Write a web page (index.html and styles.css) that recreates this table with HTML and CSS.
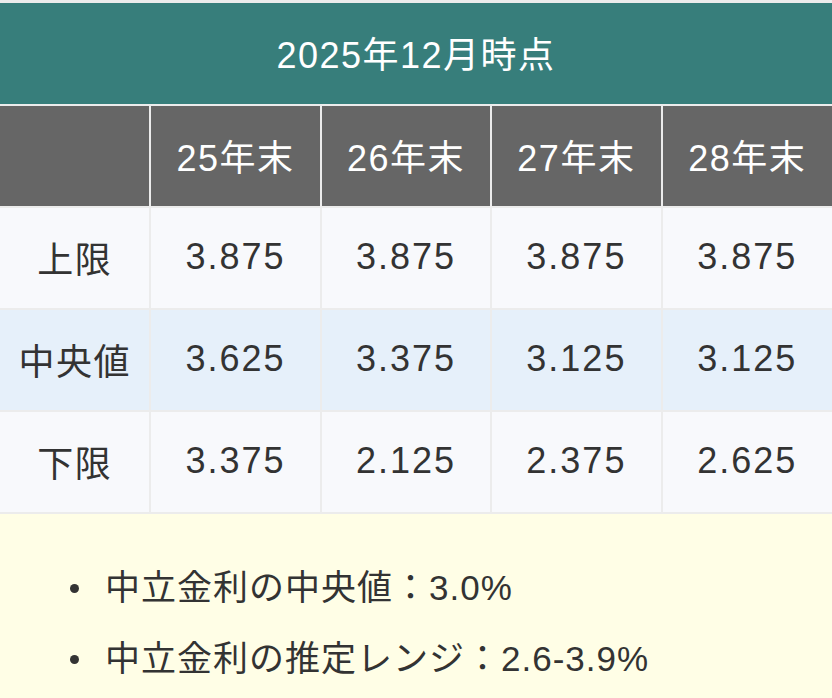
FILE: index.html
```html
<!DOCTYPE html>
<html lang="ja">
<head>
<meta charset="utf-8">
<link rel="stylesheet" href="styles.css">
</head>
<body>
<div class="card">
  <table class="rates">
    <colgroup>
      <col class="c-label">
      <col class="c-year">
      <col class="c-year">
      <col class="c-year">
      <col class="c-year">
    </colgroup>
    <thead>
      <tr><th class="title" colspan="5">2025年12月時点</th></tr>
      <tr class="head">
        <th></th><th>25年末</th><th>26年末</th><th>27年末</th><th>28年末</th>
      </tr>
    </thead>
    <tbody>
      <tr class="row"><td>上限</td><td class="num">3.875</td><td class="num">3.875</td><td class="num">3.875</td><td class="num">3.875</td></tr>
      <tr class="row mid"><td>中央値</td><td class="num">3.625</td><td class="num">3.375</td><td class="num">3.125</td><td class="num">3.125</td></tr>
      <tr class="row"><td>下限</td><td class="num">3.375</td><td class="num">2.125</td><td class="num">2.375</td><td class="num">2.625</td></tr>
    </tbody>
  </table>
  <div class="notes">
    <ul>
      <li>中立金利の中央値：3.0%</li>
      <li>中立金利の推定レンジ：2.6-3.9%</li>
    </ul>
  </div>
</div>
</body>
</html>
```

FILE: styles.css
```css
html, body {
  margin: 0;
  padding: 0;
  background: #fffee6;
}
body {
  font-family: "Liberation Sans", "Noto Sans CJK JP", sans-serif;
  color: #333;
  width: 832px;
  height: 698px;
  overflow: hidden;
}
.card {
  border-top: 3px solid #ececec;
}
.rates {
  width: 832px;
  border-collapse: collapse;
  table-layout: fixed;
}
.c-label { width: 150px; }
.c-year { width: 170px; }
.rates th, .rates td {
  border: 2px solid #ececec;
  text-align: center;
  vertical-align: middle;
  padding: 0 0 2px 0;
  height: 98px;
  font-size: 36px;
  font-weight: 400;
  letter-spacing: 1.5px;
}
.rates tr > :first-child { border-left: none; }
.rates tr > :last-child { border-right: none; }
.rates th.title {
  background: #377e7b;
  color: #fff;
  border-top: none;
  height: 97px;
  padding-bottom: 4px;
}
.head th {
  background: #666666;
  color: #fff;
}
.row td {
  background: #f8f9fc;
  color: #333;
}
.rates td.num {
  letter-spacing: 2px;
}
.row.mid td {
  background: #e6f0fa;
}
.notes {
  padding: 38px 0 0 0;
}
.notes ul {
  margin: 0;
  padding-left: 105px;
  list-style: none;
}
.notes li {
  font-size: 35px;
  line-height: 71px;
  color: #333;
  letter-spacing: 1px;
}
.notes li::before {
  content: "";
  display: inline-block;
  width: 9px;
  height: 9px;
  border-radius: 50%;
  background: #333;
  margin-left: -35px;
  margin-right: 26px;
  vertical-align: middle;
  position: relative;
  top: -2px;
}
```
